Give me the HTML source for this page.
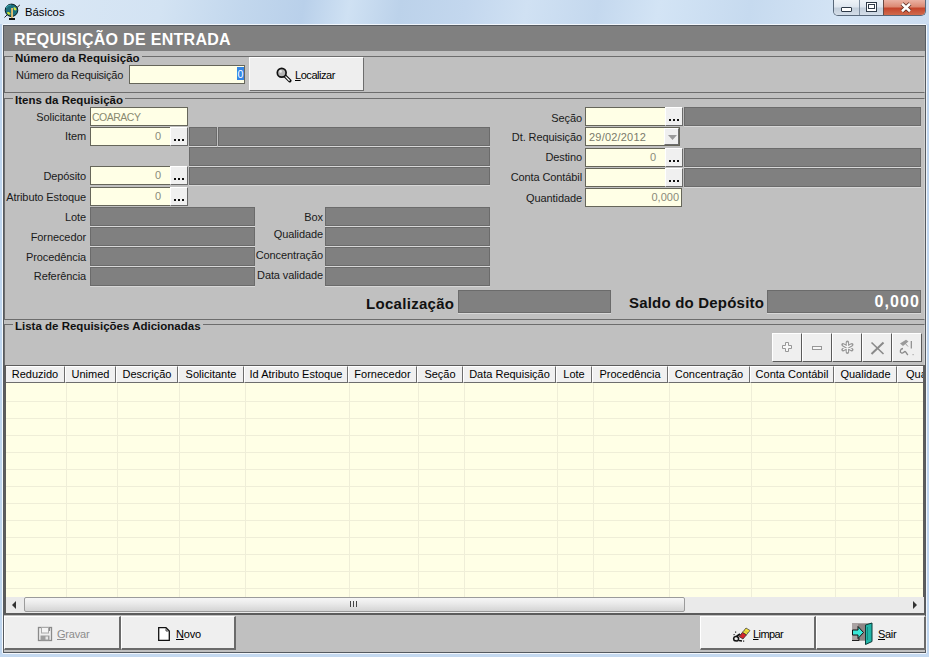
<!DOCTYPE html>
<html><head><meta charset="utf-8">
<style>
*{margin:0;padding:0;box-sizing:border-box}
html,body{width:929px;height:657px;overflow:hidden}
body{position:relative;font-family:"Liberation Sans",sans-serif;font-size:11px;color:#000;
background:linear-gradient(100deg,#dbe8f5 0px,#d3e3f3 160px,#c2d7ed 240px,#b9d0ea 300px,#cfe1f3 345px,#bcd2ea 395px,#c3d7ee 460px,#d0e1f3 520px,#c4d8ee 590px,#d3e4f5 650px,#c6daef 740px,#d4e4f5 830px,#cbdcf0 929px)}
.a{position:absolute}
.lbl{position:absolute;font-size:11px;white-space:nowrap;text-align:right;line-height:13px;letter-spacing:-0.1px;color:#1a1a1a}
.inp{position:absolute;background:#ffffe6;border:1px solid #66665a;color:#8a8a7a;font-size:11px;line-height:16px;padding:0 3px;white-space:nowrap}
.inp.r{text-align:right}
.btn3{position:absolute;background:#eeeeee;border-top:1px solid #fff;border-left:1px solid #fff;border-right:1px solid #6d6d6d;border-bottom:1px solid #6d6d6d;font-size:11px;text-align:center}
.gray{position:absolute;background:#808080;border:1px solid #6b6b6b;box-shadow:0 1px 0 #d8d8d8}
.grp{position:absolute;border-top:1px solid #6d6d6d;border-left:1px solid #6d6d6d;border-right:1px solid #d0d0d0}
.grpt{position:absolute;font-weight:bold;font-size:11.5px;background:#c0c0c0;padding:0 2px;line-height:13px;color:#111}
.dots{position:absolute;background:#f0f0f0;border-top:1px solid #fff;border-left:1px solid #fff;border-right:1px solid #6a6a6a;border-bottom:1px solid #6a6a6a}
.dots i{position:absolute;top:11px;left:3px;width:2px;height:2px;background:#111;box-shadow:4px 0 0 #111,8px 0 0 #111}
.hd{background:#f0f0f0;border-top:1px solid #fff;border-left:1px solid #fff;border-right:1px solid #6d6d6d;border-bottom:1px solid #6d6d6d;text-align:center;line-height:15px;white-space:nowrap;overflow:hidden;font-size:11px}
.bb{background:#efefef;border-top:1px solid #fff;border-left:1px solid #fff;border-right:2px solid #6a6a6a;border-bottom:2px solid #6a6a6a;font-size:11px;line-height:13px}
</style></head><body>
<!-- title bar -->
<svg class="a" style="left:0;top:0" width="24" height="24" viewBox="0 0 24 24">
<path d="M4.5 17.5L7 15M17 7.5L19.8 5" stroke="#222" stroke-width="1"/>
<ellipse cx="11.5" cy="10.3" rx="6.3" ry="6.2" fill="#1b6f7c" stroke="#0b1e22" stroke-width="1"/>
<path d="M13.5 7.5C15 7 16.5 8 16.5 10C15 11 13.5 10 13.5 7.5Z" fill="#d6e83a"/>
<path d="M7 12.5C8 11.5 10 12 10.5 14C9 15.5 7.5 14.5 7 12.5Z" fill="#c9e030"/>
<path d="M6 8C7 6 9 5 11 5" stroke="#3a9aa6" stroke-width="1.2" fill="none"/>
<rect x="11" y="8" width="2" height="10.5" fill="#c9a453"/>
<rect x="11.8" y="8" width="0.8" height="10.5" fill="#e8d39a"/>
<rect x="9" y="18" width="6" height="2" fill="#111"/>
</svg>
<div class="a" style="left:25px;top:5px;font-size:11.3px;line-height:15px;color:#000">Básicos</div>
<!-- caption buttons -->
<div class="a" style="left:833px;top:0;width:93px;height:16px;border:1px solid #58687a;border-top:none;border-radius:0 0 5px 5px;overflow:hidden;background:#dfe9f4">
 <div class="a" style="left:0;top:0;width:25px;height:15px;background:linear-gradient(#eef3f8,#dfe7f0 45%,#c3cfdc 55%,#d4dde8)"></div>
 <div class="a" style="left:25px;top:0;width:1px;height:15px;background:#7e8ea0"></div>
 <div class="a" style="left:26px;top:0;width:23px;height:15px;background:linear-gradient(#eef3f8,#dfe7f0 45%,#c3cfdc 55%,#d4dde8)"></div>
 <div class="a" style="left:49px;top:0;width:1px;height:15px;background:#6a4a44"></div>
 <div class="a" style="left:50px;top:0;width:43px;height:15px;background:linear-gradient(#eab2a4,#dc8a74 45%,#c4452c 55%,#d06a4c)"></div>
 <div class="a" style="left:7px;top:7px;width:11px;height:5px;border:1px solid #2e3a48;background:#fff;border-radius:1px"></div>
 <div class="a" style="left:32px;top:2px;width:11px;height:10px;border:1px solid #2e3a48;background:#fff"></div>
 <div class="a" style="left:34px;top:4px;width:7px;height:5px;border:1px solid #2e3a48;background:#fff"></div>
 <svg class="a" style="left:66px;top:2px" width="12" height="11" viewBox="0 0 12 11"><path d="M2 1.8L10 9.2M10 1.8L2 9.2" stroke="#5a2a20" stroke-width="4.2"/><path d="M2 1.8L10 9.2M10 1.8L2 9.2" stroke="#fff" stroke-width="2.6"/></svg>
</div>
<!-- client -->
<div class="a" style="left:0;top:24px;width:2px;height:633px;background:#bed5ee"></div>
<div class="a" style="left:927px;top:24px;width:2px;height:633px;background:#bfd5ee"></div>
<div class="a" style="left:0;top:654px;width:929px;height:3px;background:#c4d9f0"></div>

<div class="a" style="left:2px;top:24px;width:925px;height:630px;border:1px solid rgba(255,255,255,0.75);border-radius:2px"></div>
<div class="a" style="left:3px;top:25px;width:923px;height:628px;background:#c0c0c0;border:1px solid #555a60;border-top:none"></div>
<div class="a" style="left:3px;top:25px;width:923px;height:26px;background:#808080;border:1px solid #555a60;border-bottom:none"></div>
<div class="a" style="left:14px;top:31px;font-size:16px;font-weight:bold;color:#fff;line-height:18px;letter-spacing:0.3px">REQUISIÇÃO DE ENTRADA</div>

<!-- group 1 -->
<div class="grp" style="left:4px;top:56px;width:921px;height:37px;border-bottom:1px solid #6d6d6d"></div>
<div class="grpt" style="left:13px;top:52px">Número da Requisição</div>
<div class="lbl" style="right:806px;top:69px;letter-spacing:-0.25px">Número da Requisição</div>
<div class="inp" style="left:129px;top:65px;width:116px;height:19px"><span class="a" style="left:107px;top:1px;width:7px;height:13px;background:#3385e5;color:#fff;line-height:14px;text-align:center;font-size:10.5px">0</span></div>
<div class="btn3" style="left:249px;top:57px;width:115px;height:34px;border-color:#fff #6d6d6d #6d6d6d #fff">
 <svg class="a" style="left:26px;top:9px" width="16" height="16" viewBox="0 0 16 16"><path d="M8.8 8.8L13.8 13.8" stroke="#111" stroke-width="3.4" stroke-linecap="round"/><path d="M9.6 9.6L13.2 13.2" stroke="#fff" stroke-width="1.3" stroke-linecap="round"/><circle cx="5.7" cy="5.7" r="4.4" fill="#b5b5b5" stroke="#111" stroke-width="1.7"/><circle cx="4.6" cy="4.4" r="1.3" fill="#ececec"/></svg>
 <span class="a" style="left:45px;top:11px;line-height:13px;letter-spacing:-0.45px"><u>L</u>ocalizar</span>
</div>

<!-- group 2 -->
<div class="grp" style="left:4px;top:98px;width:921px;height:222px;border-bottom:1px solid #6d6d6d"></div>
<div class="grpt" style="left:13px;top:94px">Itens da Requisição</div>

<div class="lbl" style="right:843px;top:111px">Solicitante</div>
<div class="inp" style="left:90px;top:107px;width:98px;height:19px;color:#8a8a70;font-size:10.5px;padding-left:1px;letter-spacing:-0.5px;line-height:18px">COARACY</div>
<div class="lbl" style="right:843px;top:130px">Item</div>
<div class="inp r" style="left:90px;top:127px;width:81px;height:19px;padding-right:9px;line-height:17px">0</div>
<div class="dots" style="left:170px;top:127px;width:18px;height:19px"><i></i></div>
<div class="gray" style="left:189px;top:127px;width:28px;height:19px"></div>
<div class="gray" style="left:218px;top:127px;width:272px;height:19px"></div>
<div class="gray" style="left:189px;top:147px;width:301px;height:19px"></div>
<div class="lbl" style="right:843px;top:170px">Depósito</div>
<div class="inp r" style="left:90px;top:166px;width:81px;height:19px;padding-right:9px;line-height:17px">0</div>
<div class="dots" style="left:170px;top:166px;width:18px;height:19px"><i></i></div>
<div class="gray" style="left:189px;top:167px;width:301px;height:18px"></div>
<div class="lbl" style="right:843px;top:191px">Atributo Estoque</div>
<div class="inp r" style="left:90px;top:187px;width:81px;height:19px;padding-right:9px;line-height:17px">0</div>
<div class="dots" style="left:170px;top:187px;width:18px;height:19px"><i></i></div>

<div class="lbl" style="right:843px;top:211px">Lote</div>
<div class="gray" style="left:90px;top:207px;width:165px;height:19px"></div>
<div class="lbl" style="right:843px;top:231px">Fornecedor</div>
<div class="gray" style="left:90px;top:227px;width:165px;height:19px"></div>
<div class="lbl" style="right:843px;top:251px">Procedência</div>
<div class="gray" style="left:90px;top:247px;width:165px;height:19px"></div>
<div class="lbl" style="right:843px;top:270px">Referência</div>
<div class="gray" style="left:90px;top:267px;width:165px;height:19px"></div>

<div class="lbl" style="right:606px;top:211px">Box</div>
<div class="gray" style="left:325px;top:207px;width:165px;height:19px"></div>
<div class="lbl" style="right:606px;top:228px">Qualidade</div>
<div class="gray" style="left:325px;top:227px;width:165px;height:19px"></div>
<div class="lbl" style="right:606px;top:249px">Concentração</div>
<div class="gray" style="left:325px;top:247px;width:165px;height:19px"></div>
<div class="lbl" style="right:606px;top:269px">Data validade</div>
<div class="gray" style="left:325px;top:267px;width:165px;height:19px"></div>

<div class="lbl" style="right:347px;top:112px">Seção</div>
<div class="inp" style="left:585px;top:107px;width:81px;height:19px"></div>
<div class="dots" style="left:665px;top:107px;width:18px;height:19px"><i></i></div>
<div class="gray" style="left:684px;top:107px;width:237px;height:19px"></div>
<div class="lbl" style="right:347px;top:131px">Dt. Requisição</div>
<div class="inp" style="left:585px;top:127px;width:95px;height:19px;color:#7a7a6a;padding-left:3px;letter-spacing:0.2px;line-height:18px">29/02/2012</div>
<div class="btn3" style="left:664px;top:128px;width:15px;height:17px;background:#efefef"><svg class="a" style="left:3px;top:6px" width="9" height="5"><path d="M0 0H9L4.5 5Z" fill="#9a9a9a"/></svg></div>
<div class="lbl" style="right:347px;top:151px">Destino</div>
<div class="inp r" style="left:585px;top:148px;width:81px;height:19px;padding-right:9px;line-height:17px">0</div>
<div class="dots" style="left:665px;top:148px;width:18px;height:19px"><i></i></div>
<div class="gray" style="left:684px;top:148px;width:237px;height:19px"></div>
<div class="lbl" style="right:347px;top:171px">Conta Contábil</div>
<div class="inp" style="left:585px;top:168px;width:81px;height:19px"></div>
<div class="dots" style="left:665px;top:168px;width:18px;height:19px"><i></i></div>
<div class="gray" style="left:684px;top:168px;width:237px;height:19px"></div>
<div class="lbl" style="right:347px;top:192px">Quantidade</div>
<div class="inp r" style="left:585px;top:188px;width:97px;height:19px;padding-right:2px">0,000</div>

<div class="a" style="left:366px;top:296px;font-size:15px;font-weight:bold;line-height:16px;color:#111;letter-spacing:0.3px">Localização</div>
<div class="gray" style="left:458px;top:290px;width:153px;height:23px"></div>
<div class="a" style="left:629px;top:295px;font-size:15px;font-weight:bold;line-height:16px;color:#111;letter-spacing:0.2px">Saldo do Depósito</div>
<div class="gray" style="left:767px;top:290px;width:154px;height:23px;color:#fff;font-weight:bold;font-size:16px;text-align:right;line-height:21px;padding-right:0px;letter-spacing:1.1px">0,000</div>

<!-- group 3 -->
<div class="grp" style="left:4px;top:324px;width:921px;height:300px"></div>
<div class="grpt" style="left:13px;top:320px">Lista de Requisições Adicionadas</div>

<div class="btn3" style="left:772px;top:333px;width:30px;height:29px;background:#efefef;border-right-color:#5a5a5a;border-bottom-color:#5a5a5a"><svg class="a" style="left:0;top:0" width="28" height="27" viewBox="0 0 28 27"><path d="M12.5 8.5H15.5V11.5H18.5V14.5H15.5V17.5H12.5V14.5H9.5V11.5H12.5Z" fill="#f7f7f7" stroke="#979797" stroke-width="1"/></svg></div>
<div class="btn3" style="left:802px;top:333px;width:30px;height:29px;background:#efefef;border-right-color:#5a5a5a;border-bottom-color:#5a5a5a"><svg class="a" style="left:0;top:0" width="28" height="27" viewBox="0 0 28 27"><rect x="9.5" y="12.5" width="9" height="3" fill="#f7f7f7" stroke="#979797" stroke-width="1"/></svg></div>
<div class="btn3" style="left:832px;top:333px;width:30px;height:29px;background:#efefef;border-right-color:#5a5a5a;border-bottom-color:#5a5a5a"><svg class="a" style="left:0;top:0" width="28" height="27" viewBox="0 0 28 27"><path d="M14.4 8.3V18.2M10 10.7L18.8 15.7M18.8 10.7L10 15.7" stroke="#979797" stroke-width="3.4" stroke-linecap="round"/><path d="M14.4 8.8V17.7M10.5 11L18.3 15.4M18.3 11L10.5 15.4" stroke="#f7f7f7" stroke-width="1.3" stroke-linecap="round"/></svg></div>
<div class="btn3" style="left:862px;top:333px;width:30px;height:29px;background:#efefef;border-right-color:#5a5a5a;border-bottom-color:#5a5a5a"><svg class="a" style="left:0;top:0" width="28" height="27" viewBox="0 0 28 27"><path d="M8.5 8.5L20.5 20" stroke="#8a8a8a" stroke-width="1.6"/><path d="M20.5 8.5L8.5 20" stroke="#8a8a8a" stroke-width="2"/></svg></div>
<div class="btn3" style="left:892px;top:333px;width:30px;height:29px;background:#efefef;border-right-color:#5a5a5a;border-bottom-color:#5a5a5a"><svg class="a" style="left:0;top:0" width="28" height="27" viewBox="0 0 28 27"><path d="M7 9.5L13 5.8L15.5 7.5L10 12Z" fill="#9a9a9a"/><path d="M11 8L15 12.5" stroke="#999" stroke-width="1"/><path d="M18.3 7V14.4" stroke="#8a8a8a" stroke-width="1.2"/><path d="M10 14.5C7 15 6.5 18 8.5 19C10 20 11 17.5 12 17.5C13 17.5 13.5 20 15 21" stroke="#8a8a8a" stroke-width="1.3" fill="none"/><rect x="19.5" y="20" width="1.2" height="1.2" fill="#aaa"/></svg></div>
<div class="a" style="left:4px;top:365px;width:921px;height:250px;background:#ffffe6;border:1px solid #5c5c5c;border-width:1px 2px 2px 1px;overflow:hidden">
<div class="a" style="left:61px;top:17px;width:1px;height:215px;background:#efeed8"></div>
<div class="a" style="left:112px;top:17px;width:1px;height:215px;background:#efeed8"></div>
<div class="a" style="left:174px;top:17px;width:1px;height:215px;background:#efeed8"></div>
<div class="a" style="left:240px;top:17px;width:1px;height:215px;background:#efeed8"></div>
<div class="a" style="left:344px;top:17px;width:1px;height:215px;background:#efeed8"></div>
<div class="a" style="left:413px;top:17px;width:1px;height:215px;background:#efeed8"></div>
<div class="a" style="left:459px;top:17px;width:1px;height:215px;background:#efeed8"></div>
<div class="a" style="left:552px;top:17px;width:1px;height:215px;background:#efeed8"></div>
<div class="a" style="left:588px;top:17px;width:1px;height:215px;background:#efeed8"></div>
<div class="a" style="left:664px;top:17px;width:1px;height:215px;background:#efeed8"></div>
<div class="a" style="left:746px;top:17px;width:1px;height:215px;background:#efeed8"></div>
<div class="a" style="left:830px;top:17px;width:1px;height:215px;background:#efeed8"></div>
<div class="a" style="left:893px;top:17px;width:1px;height:215px;background:#efeed8"></div>
<div class="a" style="left:0;top:35px;width:920px;height:1px;background:#efeed8"></div>
<div class="a" style="left:0;top:52px;width:920px;height:1px;background:#efeed8"></div>
<div class="a" style="left:0;top:69px;width:920px;height:1px;background:#efeed8"></div>
<div class="a" style="left:0;top:86px;width:920px;height:1px;background:#efeed8"></div>
<div class="a" style="left:0;top:103px;width:920px;height:1px;background:#efeed8"></div>
<div class="a" style="left:0;top:120px;width:920px;height:1px;background:#efeed8"></div>
<div class="a" style="left:0;top:137px;width:920px;height:1px;background:#efeed8"></div>
<div class="a" style="left:0;top:154px;width:920px;height:1px;background:#efeed8"></div>
<div class="a" style="left:0;top:171px;width:920px;height:1px;background:#efeed8"></div>
<div class="a" style="left:0;top:188px;width:920px;height:1px;background:#efeed8"></div>
<div class="a" style="left:0;top:205px;width:920px;height:1px;background:#efeed8"></div>
<div class="a" style="left:0;top:222px;width:920px;height:1px;background:#efeed8"></div>
<div class="a hd" style="left:0px;top:0;width:60px;height:17px">Reduzido</div>
<div class="a hd" style="left:60px;top:0;width:51px;height:17px">Unimed</div>
<div class="a hd" style="left:111px;top:0;width:62px;height:17px">Descrição</div>
<div class="a hd" style="left:173px;top:0;width:66px;height:17px">Solicitante</div>
<div class="a hd" style="left:239px;top:0;width:104px;height:17px">Id Atributo Estoque</div>
<div class="a hd" style="left:343px;top:0;width:69px;height:17px">Fornecedor</div>
<div class="a hd" style="left:412px;top:0;width:46px;height:17px">Seção</div>
<div class="a hd" style="left:458px;top:0;width:93px;height:17px">Data Requisição</div>
<div class="a hd" style="left:551px;top:0;width:36px;height:17px">Lote</div>
<div class="a hd" style="left:587px;top:0;width:76px;height:17px">Procedência</div>
<div class="a hd" style="left:663px;top:0;width:82px;height:17px">Concentração</div>
<div class="a hd" style="left:745px;top:0;width:84px;height:17px">Conta Contábil</div>
<div class="a hd" style="left:829px;top:0;width:63px;height:17px">Qualidade</div>
<div class="a hd" style="left:892px;top:0;width:75px;height:17px">Quantidade</div>
</div>
<div class="a" style="left:5px;top:597px;width:919px;height:16px;background:#eaeaea">
 <svg class="a" style="left:7px;top:4px" width="5" height="8"><path d="M4 0V8L0 4Z" fill="#333"/></svg>
 <div class="a" style="left:19px;top:0;width:661px;height:15px;border:1px solid #9b9b9b;border-radius:2px;background:linear-gradient(#f7f7f7,#e9e9e9 45%,#d4d4d4)"></div>
 <div class="a" style="left:345px;top:4px;width:1px;height:6px;background:#444;box-shadow:3px 0 0 #444,6px 0 0 #444"></div>
 <svg class="a" style="left:908px;top:4px" width="5" height="8"><path d="M0 0V8L4 4Z" fill="#333"/></svg>
</div>
<div class="a" style="left:4px;top:615px;width:921px;height:37px;background:#c0c0c0"></div>
<div class="a bb" style="left:4px;top:616px;width:117px;height:34px"><svg class="a" style="left:32px;top:9px" width="16" height="16" viewBox="0 0 16 16"><rect x="1.5" y="1.5" width="13" height="13" fill="none" stroke="#8a8a8a" stroke-width="1.3"/><rect x="4.5" y="1.5" width="7" height="5.5" fill="#f4f4f4" stroke="#aaa" stroke-width="1"/><path d="M12.5 2V5" stroke="#8a8a8a" stroke-width="1.2"/><rect x="3.5" y="9.5" width="9" height="5" fill="#9e9e9e"/><rect x="8.5" y="10.5" width="2.5" height="3" fill="#e6e6e6"/></svg><span class="a" style="left:52px;top:11px;color:#8c8c8c;letter-spacing:-0.2px"><u>G</u>ravar</span></div>
<div class="a bb" style="left:121px;top:616px;width:115px;height:34px"><svg class="a" style="left:36px;top:10px" width="13" height="14" viewBox="0 0 13 14"><path d="M0.7 0.7H8L11.3 4V13.3H0.7Z" fill="#fff" stroke="#111" stroke-width="1.3"/><path d="M8 1.5V4H10.5" fill="none" stroke="#333" stroke-width="0.9"/></svg><span class="a" style="left:54px;top:11px;letter-spacing:-0.2px"><u>N</u>ovo</span></div>
<div class="a bb" style="left:700px;top:616px;width:116px;height:34px"><svg class="a" style="left:30px;top:7px" width="20" height="20" viewBox="0 0 20 20">
<path d="M8 12.5L11.5 8.3L15.5 10.8L12 15Z" fill="#d8242c" stroke="#222" stroke-width="0.7"/>
<path d="M11.5 8.3L15 4L19 6.5L15.5 10.8Z" fill="#f2e03a" stroke="#333" stroke-width="0.7"/>
<path d="M13 6.5L17 9" stroke="#555" stroke-width="0.6" stroke-dasharray="1 1"/>
<path d="M4.5 17C2 16.5 2 13 4.5 12.5C6.5 12 8 13.5 7.5 15.5C7 17.5 5 17.5 4.5 16M6 12L9 10M8 16.5L11 17" stroke="#111" stroke-width="1.6" fill="none"/>
<rect x="4" y="7.5" width="1.2" height="1.2" fill="#222"/><rect x="2.5" y="10" width="1.2" height="1.2" fill="#333"/><rect x="12" y="16.5" width="1.2" height="1.2" fill="#222"/><rect x="9.5" y="10.5" width="1" height="1" fill="#444"/>
</svg><span class="a" style="left:52px;top:11px;letter-spacing:-0.6px"><u>L</u>impar</span></div>
<div class="a bb" style="left:816px;top:616px;width:110px;height:34px"><svg class="a" style="left:34px;top:5px" width="24" height="24" viewBox="0 0 24 24">
<rect x="1" y="1" width="20" height="18" fill="#aaa3a3"/>
<rect x="7" y="2" width="8" height="16" fill="#8e8585"/>
<path d="M1 18.5H8V16" stroke="#222" stroke-width="1" fill="none"/>
<path d="M14.5 3L21 1V19.5L14.5 22.5Z" fill="#22b5a8" stroke="#0b3b38" stroke-width="1"/>
<path d="M16.5 5V18" stroke="#138a80" stroke-width="1"/>
<path d="M1.5 8H7V4.5L12.5 10.5L7 16.5V13H1.5Z" fill="#3ae8d8" stroke="#111" stroke-width="1"/>
</svg><span class="a" style="left:61px;top:11px;letter-spacing:-0.3px"><u>S</u>air</span></div>
<div class="a" style="left:5px;top:366px;width:1px;height:247px;background:#5c5c5c"></div>
</body></html>
